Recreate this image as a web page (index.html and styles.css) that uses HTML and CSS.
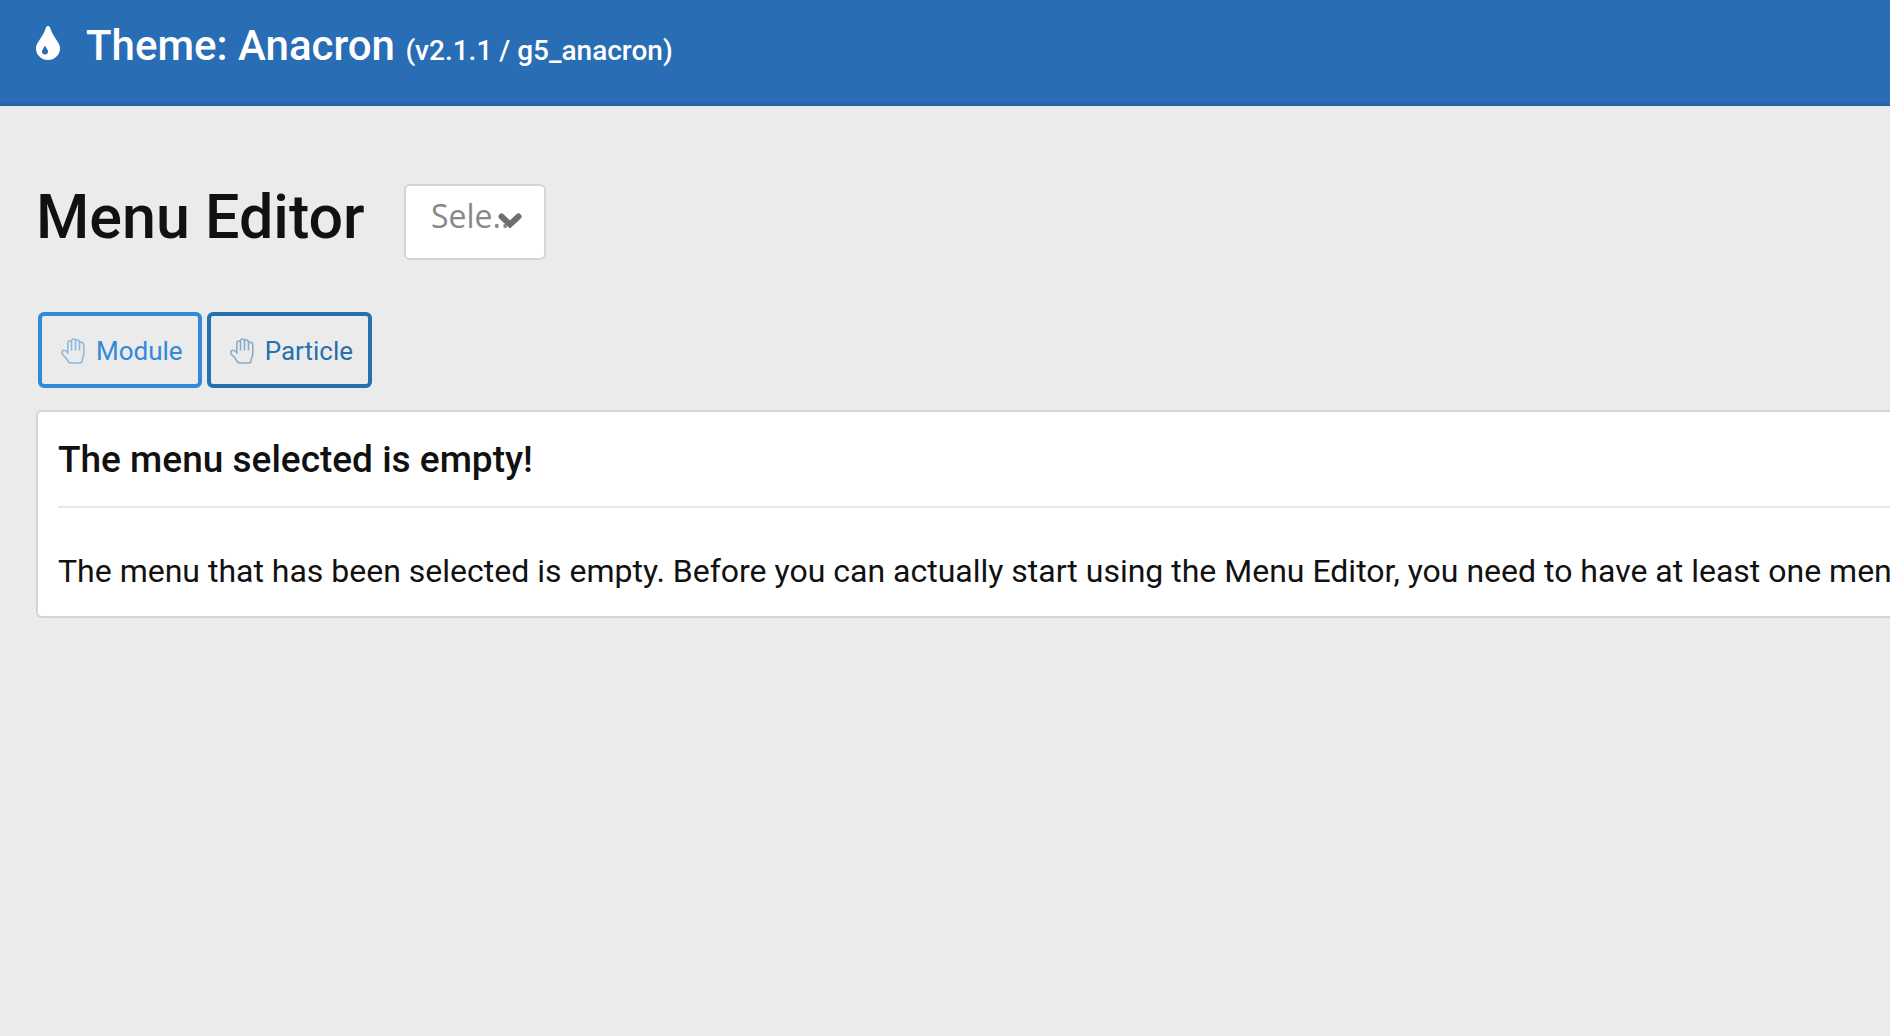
FILE: index.html
```html
<!DOCTYPE html>
<html lang="en">
<head>
    <meta charset="UTF-8">
    <meta name="viewport" content="width=device-width, initial-scale=1.0">
    <title>Menu Editor</title>

    <link rel="stylesheet" href="styles.css">
</head>
<body>
    <header class="header">
        <svg class="iconTint" viewBox="0 0 24 34" aria-hidden="true">
            <path fill="#fff" fill-rule="evenodd" d="M12 0C13 0 13.7.6 14.1 1.8C15.9 7.5 18.5 10.900 20.500 14.100C22.700 17.300 24 19.300 24 22.200C24 28.800 18.600 34 12 34S0 28.800 0 22.200C0 19.300 1.300 17.300 3.500 14.100C5.500 10.900 8.100 7.500 9.900 1.800C10.300.6 11 0 12 0ZM9 20C8.300 20 8.400 21 7.200 22.800C6.400 24 6 24.600 6 25.500A3 3 0 0 0 12 25.500C12 24.600 11.600 24 10.800 22.800C9.600 21 9.700 20 9 20Z"/>
        </svg>
        <h1 class="theme">Theme: Anacron <small>(v2.1.1 / g5_anacron)</small></h1>
    </header>
    <main class="content">
        <div class="titleRow">
            <h2 class="title">Menu Editor</h2>
            <div class="menuSelect">
                <select id="menuSelect" aria-label="Select a menu">
                    <option>Sele..</option>
                </select>
                <svg class="chevron" viewBox="0 0 24 16" aria-hidden="true">
                    <path d="M3.500 3.500L12 11.500L20.500 3.500"/>
                </svg>
            </div>
        </div>
        <div class="buttons">
            <button type="button" class="button buttonModule">
                <svg class="iconHand" viewBox="0 0 24 26" aria-hidden="true">
                    <path d="M6.800 14.500V5.200C6.800 2.800 9.300 2.500 10.300 3.500C10.500.4 14 .4 14.600 2.300C15.800 1.300 18.500 1.800 18.500 4.500C20.500 3.600 22.800 4.500 22.800 7V15.500C22.800 18.500 21 20.500 21 22.500C21 24.500 20 25 18.800 25H9.800C8.500 25 8 24.500 7.300 23.500L4.500 19.500L1.600 16.500C.3 14.800.9 12.800 2.500 12.300C4.200 11.800 5.500 13 6.800 14.500V16"/>
                    <path d="M10.500 4V12.500M14.500 3V12.500M18.500 5V12.500"/>
                </svg>
                Module
            </button>
            <button type="button" class="button buttonParticle">
                <svg class="iconHand" viewBox="0 0 24 26" aria-hidden="true">
                    <path d="M6.800 14.500V5.200C6.800 2.800 9.300 2.500 10.300 3.500C10.500.4 14 .4 14.600 2.300C15.800 1.300 18.500 1.800 18.500 4.500C20.500 3.600 22.800 4.500 22.800 7V15.500C22.800 18.500 21 20.500 21 22.500C21 24.500 20 25 18.800 25H9.800C8.500 25 8 24.500 7.300 23.500L4.500 19.500L1.600 16.500C.3 14.800.9 12.800 2.500 12.300C4.200 11.800 5.500 13 6.800 14.500V16"/>
                    <path d="M10.500 4V12.500M14.500 3V12.500M18.500 5V12.500"/>
                </svg>
                Particle
            </button>
        </div>
        <section class="panel">
            <h3>The menu selected is empty!</h3>
            <p>The menu that has been selected is empty. Before you can actually start using the Menu Editor, you need to have at least one men</p>
        </section>
    </main>
</body>
</html>
```
FILE: styles.css
```css
* {
    box-sizing: border-box;
}
body {
    margin: 0;
    background-color: #ebebeb;
    color: #111;
    font-family: Roboto, "Liberation Sans", sans-serif;
}
h1, h2, h3, p {
    margin: 0;
}
.header {
    display: flex;
    align-items: flex-start;
    height: 106px;
    padding: 20px 36px;
    background-color: #296db5;
    box-shadow: inset 0 -5px 4px -4px rgba(0,0,0,0.2);
    color: white;
}
.iconTint {
    width: 24px;
    height: 34px;
    margin: 6px 26px 0 0;
}
.theme {
    font-size: 42px;
    font-weight: 500;
    line-height: 52px;
}
.theme small {
    font-size: 28px;
}
.content {
    padding: 78px 0 0 36px;
}
.titleRow {
    display: flex;
    align-items: flex-start;
}
.title {
    width: 368px;
    font-size: 61px;
    font-weight: 500;
    line-height: 66px;
}
.menuSelect {
    position: relative;
}
.menuSelect select {
    display: block;
    width: 142px;
    height: 76px;
    padding: 0 0 13px 25px;
    border: 2px solid #d4d4d4;
    border-radius: 6px;
    background-color: white;
    appearance: none;
    color: #888;
    font-family: "Open Sans", sans-serif;
    font-size: 32px;
}
/* arrow lies over the end of the text */
.chevron {
    position: absolute;
    top: 29px;
    right: 24px;
    width: 24px;
    height: 16px;
    fill: none;
    stroke: #6e6e6e;
    stroke-width: 6;
    stroke-linecap: round;
    pointer-events: none;
}
.buttons {
    display: flex;
    gap: 5px;
    margin: 52px 0 22px 2px;
}
.button {
    display: flex;
    align-items: center;
    gap: 11px;
    height: 76px;
    padding: 2px 15px 0 19px;
    border: 4px solid;
    border-radius: 6px;
    background: none;
    font-family: inherit;
    font-size: 26px;
    cursor: pointer;
}
.buttonModule {color: #318ad6;}
.buttonParticle {color: #2770ae;}
.iconHand {
    width: 24px;
    height: 26px;
    fill: none;
    stroke: currentColor;
    stroke-width: 1.6;
    opacity: 0.5;
}
.panel {
    padding: 20px 0 21px 20px;
    border: 2px solid #d4d4d4;
    border-right: none;
    border-radius: 6px 0 0 6px;
    background-color: white;
    white-space: nowrap;
    overflow: hidden;
}
.panel h3 {
    padding-bottom: 18px;
    border-bottom: 2px solid #e8e8e8;
    font-size: 37px;
    font-weight: 500;
    line-height: 56px;
}
.panel p {
    padding-top: 39px;
    font-size: 32px;
    line-height: 48px;
}
```
